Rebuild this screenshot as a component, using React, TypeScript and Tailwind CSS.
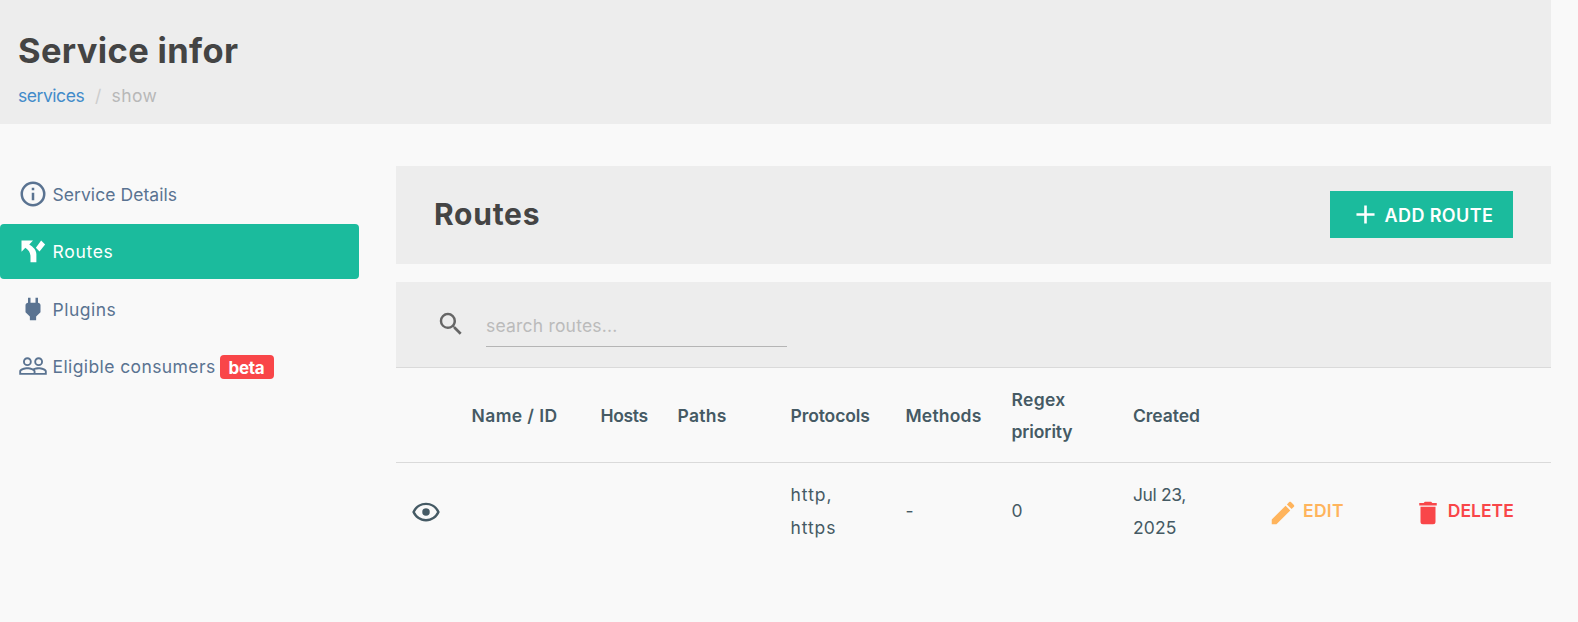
import React from "react";

type IconProps = { path: string; className?: string };

function Icon({ path, className = "size-[30px]" }: IconProps) {
  return (
    <svg viewBox="0 0 24 24" fill="currentColor" className={`shrink-0 ${className}`}>
      <path d={path} />
    </svg>
  );
}

const icons = {
  info: "M11 9h2V7h-2m1 13c-4.41 0-8-3.59-8-8s3.59-8 8-8 8 3.59 8 8-3.59 8-8 8m0-18A10 10 0 0 0 2 12a10 10 0 0 0 10 10 10 10 0 0 0 10-10A10 10 0 0 0 12 2m-1 15h2v-6h-2v6z",
  fork: "M2.8 3.500v9l3.100-3.100c2.700 1.700 4.100 4.200 4.100 7.200V21h4.700v-6.500c0-3-2.300-5.700-5.700-7.700l3-3.300zM18.500 3.600l-4.200 5.700 2.900 3.100 4.500-5.600z",
  plug: "M16 7V3h-2v4h-4V3H8v4C7 7 6 8 6 9v5.5L9.5 18v3h5v-3l3.5-3.5V9c0-1-1-2-2-2z",
  people:
    "M16.5 13c-1.2 0-3.07.34-4.5 1-1.43-.67-3.3-1-4.5-1C5.33 13 1 14.08 1 16.25V19h22v-2.75c0-2.17-4.33-3.25-6.5-3.25zm-4 4.5h-10v-1.25c0-.54 2.56-1.75 5-1.75s5 1.21 5 1.75v1.25zm9 0H14v-1.25c0-.46-.2-.86-.52-1.22.88-.3 1.96-.53 3.02-.53 2.44 0 5 1.21 5 1.75v1.25zM7.5 12a3.5 3.5 0 1 0 0-7 3.5 3.5 0 0 0 0 7zm0-5.5a2 2 0 1 1 0 4 2 2 0 0 1 0-4zm9 5.5a3.5 3.5 0 1 0 0-7 3.5 3.5 0 0 0 0 7zm0-5.5a2 2 0 1 1 0 4 2 2 0 0 1 0-4z",
  plus: "M19 13h-6v6h-2v-6H5v-2h6V5h2v6h6v2z",
  search:
    "M9.5 3A6.5 6.5 0 0 1 16 9.5c0 1.61-.59 3.09-1.56 4.23l.27.27h.79l5 5-1.5 1.5-5-5v-.79l-.27-.27A6.516 6.516 0 0 1 9.5 16 6.5 6.5 0 0 1 3 9.5 6.5 6.5 0 0 1 9.5 3m0 2C7 5 5 7 5 9.5S7 14 9.5 14 14 12 14 9.5 12 5 9.5 5z",
  eye: "M12 9a3 3 0 0 1 3 3 3 3 0 0 1-3 3 3 3 0 0 1-3-3 3 3 0 0 1 3-3m0-4.500c5 0 9.270 3.110 11 7.500-1.730 4.390-6 7.500-11 7.500S2.730 16.390 1 12c1.730-4.390 6-7.500 11-7.500M3.180 12a9.821 9.821 0 0 0 17.640 0 9.821 9.821 0 0 0-17.640 0z",
  pencil:
    "M20.710 7.040c.39-.39.39-1.040 0-1.410l-2.340-2.340c-.37-.39-1.020-.39-1.410 0l-1.840 1.830 3.750 3.750M3 17.250V21h3.750L17.810 9.930l-3.750-3.750L3 17.250z",
  trash: "M19 4h-3.500l-1-1h-5l-1 1H5v2h14M6 19a2 2 0 0 0 2 2h8a2 2 0 0 0 2-2V7H6v12z",
};

const nav = [
  { label: "Service Details", icon: icons.info, style: "text-[#5a7391]", tracking: "tracking-[0.06px]", shift: "size-[30px]" },
  { label: "Routes", icon: icons.fork, style: "bg-[#1bbb9d] text-white", tracking: "tracking-[0.7px]", shift: "size-[30px] -mt-[1px]" },
  { label: "Plugins", icon: icons.plug, style: "text-[#5a7391]", tracking: "tracking-[0.5px]", shift: "size-[30px] -mt-[1px]" },
  { label: "Eligible consumers", icon: icons.people, style: "text-[#5a7391]", tracking: "tracking-[0.4px]", shift: "size-[30px] -mt-[2px]", beta: true },
];

const columns =
  "grid grid-cols-[75.5px_129px_77px_113px_115px_106px_121.5px_135px_144.7px_1fr] items-center";

export default function App() {
  return (
    <div className="h-[622px] w-[1578px] overflow-hidden bg-[#f9f9f9] pr-[27px] font-['Inter',sans-serif] text-[17.5px] leading-[32.5px]">
      <header className="h-[124px] bg-[#ededed] pt-[31px] pl-[18px]">
        <h1 className="text-[34.5px] leading-[40px] font-bold tracking-[0.35px] text-[#444]">Service infor</h1>
        <nav className="mt-[9px] flex">
          <a className="w-[77px] tracking-[-0.45px] text-[#428bca]">services</a>
          <span className="w-[16.5px] text-[#ccc]">/</span>
          <span className="tracking-[0.4px] text-[#b8b8b8]">show</span>
        </nav>
      </header>

      <div className="flex">
        <aside className="flex w-[359px] flex-col gap-[2.5px] pt-[42.5px]">
          {nav.map((n) => (
            <div key={n.label} className={`flex h-[55px] items-center rounded-[4px] pl-[17.5px] ${n.style}`}>
              <Icon path={n.icon} className={n.shift} />
              <span className={`mt-[2px] ml-[5px] whitespace-nowrap ${n.tracking}`}>{n.label}</span>
              {n.beta && (
                <span className="ml-[4px] h-6 w-[54px] rounded-[4px] bg-[#f94649] text-center text-[17px] leading-[26px] font-bold tracking-[-0.3px] text-white">
                  beta
                </span>
              )}
            </div>
          ))}
        </aside>

        <main className="ml-[37px] flex-1 pt-[42px] text-[#455a64]">
          <section className="flex h-[98px] items-center justify-between bg-[#ededed] pr-[38px] pl-[38px]">
            <h2 className="-mt-[2px] text-[30px] font-bold tracking-[0.75px] text-[#444]">Routes</h2>
            <button className="-mt-[1px] flex h-[47px] w-[183px] items-center bg-[#1bbb9d] pl-[20px] text-[18px] font-semibold tracking-[0.4px] text-white">
              <Icon path={icons.plus} className="size-[31px]" />
              <span className="mt-[4px] ml-[3.5px] whitespace-nowrap">ADD ROUTE</span>
            </button>
          </section>

          <section className="mt-[18px] flex h-[86px] items-start border-b border-[#dadada] bg-[#ededed] pl-[40px]">
            <Icon path={icons.search} className="mt-[27px] size-[30px] text-[#666]" />
            <div className="mt-[28px] ml-[20px] h-[37px] w-[301px] border-b border-[#b5b5b5] tracking-[0.2px] text-[#bbb]">
              search routes...
            </div>
          </section>

          <div className={`${columns} h-[95px] border-b border-[#dadada] pt-[2px] font-semibold whitespace-nowrap`}>
            <span />
            <span className="tracking-[0.4px]">Name / ID</span>
            <span className="tracking-[-0.35px]">Hosts</span>
            <span className="tracking-[0.3px]">Paths</span>
            <span className="tracking-[-0.1px]">Protocols</span>
            <span className="tracking-[0.2px]">Methods</span>
            <span>
              <span className="block tracking-[0.3px]">Regex</span>
              <span className="block tracking-[-0.1px]">priority</span>
            </span>
            <span className="tracking-[-0.05px]">Created</span>
            <span />
            <span />
          </div>

          <div className={`${columns} h-[97px] whitespace-nowrap`}>
            <Icon path={icons.eye} className="ml-[15px] size-[30px]" />
            <span />
            <span />
            <span />
            <span>
              <span className="block tracking-[1px]">http,</span>
              <span className="block tracking-[0.9px]">https</span>
            </span>
            <span>-</span>
            <span>0</span>
            <span>
              <span className="block tracking-[-0.4px]">Jul 23,</span>
              <span className="block tracking-[0.15px]">2025</span>
            </span>
            <span className="flex items-center font-semibold tracking-[0.3px] text-[#ffb45c]">
              <Icon path={icons.pencil} className="mt-[3px] size-[30px]" />
              <span className="ml-[5px]">EDIT</span>
            </span>
            <span className="flex items-center font-semibold tracking-[0.05px] text-[#f94649]">
              <Icon path={icons.trash} className="mt-[3px] size-[30px]" />
              <span className="ml-[5px]">DELETE</span>
            </span>
          </div>
        </main>
      </div>
    </div>
  );
}
